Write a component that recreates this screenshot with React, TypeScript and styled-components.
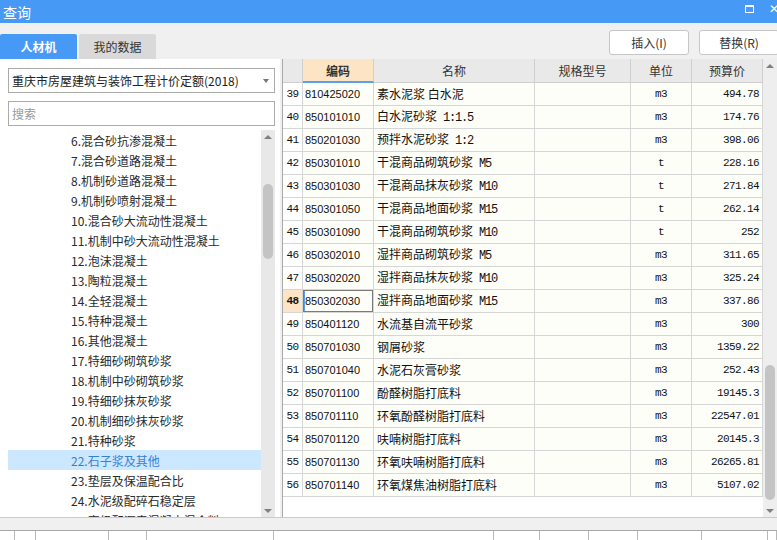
import styled, { createGlobalStyle } from "styled-components";

const GlobalStyle = createGlobalStyle`
    html, body {
        margin: 0;
        padding: 0;
        background: #f0f0f0;
    }
`;

const CJK = `"Noto Sans CJK SC", "Noto Sans", sans-serif`;
const MONO = `"Liberation Mono", "Noto Sans CJK SC", monospace`;

const Window = styled.div`
    width: 777px;
    height: 540px;
    overflow: hidden;
    background: #f0f0f0;
    display: flex;
    flex-direction: column;
    font-family: ${CJK};
`;
const TitleBar = styled.div`
    height: 23px;
    flex: none;
    background: #4799f6;
    display: flex;
    align-items: center;
    padding-left: 3px;
    color: #fff;
    font-size: 14px;
`;
const TitleText = styled.span`
    flex: 1;
    line-height: 1;
`;
const MaxIcon = styled.div`
    width: 7px;
    height: 5px;
    border: 1.5px solid #fff;
    border-top-width: 2.5px;
    margin-right: 15px;
    margin-top: -5px;
`;
const CloseIcon = styled.span`
    font-family: "DejaVu Sans", sans-serif;
    font-weight: 700;
    font-size: 12px;
    width: 8px;
    overflow: hidden;
    margin-top: -6px;
`;
const Toolbar = styled.div`
    height: 36px;
    flex: none;
    display: flex;
    align-items: flex-end;
`;
const Tab = styled.div<{ $active?: boolean }>`
    width: 77px;
    height: 25px;
    margin-right: 2px;
    display: flex;
    align-items: center;
    justify-content: center;
    font-size: 12px;
    font-weight: ${(p) => (p.$active ? 700 : 400)};
    color: ${(p) => (p.$active ? "#fff" : "#333")};
    background: ${(p) => (p.$active ? "#4799f6" : "#d9d9d9")};
    border-top-left-radius: 2px;
    border-top-right-radius: 2px;
`;
const Spacer = styled.div`
    flex: 1;
`;
const Buttons = styled.div`
    align-self: flex-start;
    margin-top: 7px;
    display: flex;
    gap: 10px;
    margin-right: -2px;
`;
const Button = styled.button`
    width: 80px;
    height: 25px;
    box-sizing: border-box;
    background: #fff;
    border: 1px solid #c6c6c6;
    border-radius: 3px;
    font-family: ${CJK};
    font-size: 12px;
    color: #333;
    padding: 0;
`;
const Main = styled.div`
    height: 458px;
    flex: none;
    display: flex;
`;
const LeftPanel = styled.div`
    width: 280px;
    flex: none;
    box-sizing: border-box;
    background: #fff;
    padding: 9px 5px 0 8px;
    display: flex;
    flex-direction: column;
    gap: 8px;
`;
const Field = styled.div`
    height: 25px;
    flex: none;
    box-sizing: border-box;
    border: 1px solid #ababab;
    display: flex;
    align-items: center;
    padding: 0 3px;
    font-size: 12px;
    color: #222;
`;
const FieldText = styled.span<{ $placeholder?: boolean }>`
    flex: 1;
    color: ${(p) => (p.$placeholder ? "#999" : "#222")};
    white-space: nowrap;
`;
const Caret = styled.span`
    width: 0;
    height: 0;
    border-left: 3.5px solid transparent;
    border-right: 3.5px solid transparent;
    border-top: 4px solid #777;
    margin-right: 2px;
`;
const ListWrap = styled.div`
    flex: 1;
    display: flex;
    margin-top: -4px;
    min-height: 0;
    overflow: hidden;
`;
const List = styled.div`
    flex: 1;
    display: flex;
    flex-direction: column;
`;
const ListItem = styled.div<{ $selected?: boolean }>`
    height: 20px;
    flex: none;
    padding-left: 63px;
    display: flex;
    align-items: center;
    font-size: 12px;
    white-space: nowrap;
    color: ${(p) => (p.$selected ? "#3a7fd6" : "#2a2a2a")};
    background: ${(p) => (p.$selected ? "#cce8ff" : "transparent")};
`;
const ScrollTrack = styled.div<{ $light?: boolean }>`
    width: 14px;
    flex: none;
    background: ${(p) => (p.$light ? "#eeeeee" : "#e8e8e8")};
    display: flex;
    flex-direction: column;
    align-items: center;
    padding: 5px 0 4px;
    box-sizing: border-box;
`;
const ArrowUp = styled.div`
    width: 0;
    height: 0;
    border-left: 4px solid transparent;
    border-right: 4px solid transparent;
    border-bottom: 4px solid #808080;
`;
const ArrowDown = styled(ArrowUp)`
    border-bottom: none;
    border-top: 4px solid #808080;
`;
const Thumb = styled.div<{ $top: number; $height: number }>`
    width: 10px;
    height: ${(p) => p.$height}px;
    margin-top: ${(p) => p.$top}px;
    background: #c4c4c4;
    border-radius: 5px;
`;
const TrackFill = styled.div`
    flex: 1;
`;
const Splitter = styled.div`
    width: 2px;
    flex: none;
    background: #f0f0f0;
`;
const GridPanel = styled.div`
    flex: 1;
    display: flex;
    background: #fff;
    border-left: 1px solid #a9a9a9;
`;
const Grid = styled.div`
    width: 480px;
    flex: none;
    display: flex;
    flex-direction: column;
`;
const Row = styled.div<{ $header?: boolean }>`
    display: grid;
    grid-template-columns: 20px 71px 161px 96px 61px 71px;
    height: ${(p) => (p.$header ? 24 : 23)}px;
    flex: none;
`;
const HeadCell = styled.div<{ $active?: boolean }>`
    box-sizing: border-box;
    border-right: 1px solid #cfcfcf;
    border-bottom: ${(p) => (p.$active ? "2px solid #5aa0ee" : "1px solid #cfcfcf")};
    background: ${(p) => (p.$active ? "#fde4c4" : "#e9e9e9")};
    display: flex;
    align-items: center;
    justify-content: center;
    font-size: 12px;
    font-weight: ${(p) => (p.$active ? 700 : 400)};
    color: #333;
`;
const Cell = styled.div<{ $align?: "left" | "center" | "right"; $mono?: boolean; $num?: boolean }>`
    box-sizing: border-box;
    border-right: 1px solid #d6d6d6;
    border-bottom: 1px solid #d6d6d6;
    background: #fefef9;
    display: flex;
    align-items: center;
    justify-content: ${(p) =>
        p.$align === "right" ? "flex-end" : p.$align === "center" ? "center" : "flex-start"};
    padding: 0 3px;
    white-space: nowrap;
    overflow: hidden;
    font-family: ${(p) => (p.$mono ? MONO : p.$num ? `"Liberation Sans", sans-serif` : CJK)};
    font-size: ${(p) => (p.$mono ? 11 : 12)}px;
    letter-spacing: ${(p) => (p.$mono ? "-0.6px" : "0")};
    color: #111;
`;
const RowNum = styled(Cell)<{ $active?: boolean }>`
    justify-content: center;
    padding: 0;
    background: ${(p) => (p.$active ? "#fde4c4" : "#fff")};
    font-weight: ${(p) => (p.$active ? 700 : 400)};
`;
const CodeCell = styled(Cell)<{ $focus?: boolean }>`
    font-size: 11px;
    padding-left: 2px;
    ${(p) =>
        p.$focus &&
        `
        box-shadow: inset 0 0 0 1px #7a7a7a, inset 1px 0 0 1px #5aa0ee;
    `}
`;
const NameText = styled.span`
    font-family: ${CJK};
    font-size: 12px;
    line-height: 16px;
`;
const NameSuffix = styled.span`
    font-family: ${MONO};
    font-size: 12px;
    letter-spacing: -1.2px;
    margin-left: 6px;
`;
const GridSpace = styled.div`
    flex: 1;
`;
const Footer = styled.div`
    flex: 1;
    display: flex;
    flex-direction: column;
    border-top: 1px solid #cacaca;
`;
const FooterStrip = styled.div`
    height: 12px;
    flex: none;
    background: #f0f0f0;
`;
const FooterRow = styled.div`
    flex: 1;
    display: grid;
    grid-template-columns: 15px 21px 73px 38px 127px 220px 46px 49px 49px 64px 66px 9px;
    border-top: 1px solid #a8a8a8;
    background: #fff;
`;
const FooterCell = styled.div`
    border-right: 1px solid #b8b8b8;
`;

const treeItems = [
    "6.混合砂抗渗混凝土",
    "7.混合砂道路混凝土",
    "8.机制砂道路混凝土",
    "9.机制砂喷射混凝土",
    "10.混合砂大流动性混凝土",
    "11.机制中砂大流动性混凝土",
    "12.泡沫混凝土",
    "13.陶粒混凝土",
    "14.全轻混凝土",
    "15.特种混凝土",
    "16.其他混凝土",
    "17.特细砂砌筑砂浆",
    "18.机制中砂砌筑砂浆",
    "19.特细砂抹灰砂浆",
    "20.机制细砂抹灰砂浆",
    "21.特种砂浆",
    "22.石子浆及其他",
    "23.垫层及保温配合比",
    "24.水泥级配碎石稳定层",
    "25.密级配沥青混凝土混合料",
];

const rows: [number, string, string, string, string, string][] = [
    [39, "810425020", "素水泥浆 白水泥", "", "m3", "494.78"],
    [40, "850101010", "白水泥砂浆", "1:1.5", "m3", "174.76"],
    [41, "850201030", "预拌水泥砂浆", "1:2", "m3", "398.06"],
    [42, "850301010", "干混商品砌筑砂浆", "M5", "t", "228.16"],
    [43, "850301030", "干混商品抹灰砂浆", "M10", "t", "271.84"],
    [44, "850301050", "干混商品地面砂浆", "M15", "t", "262.14"],
    [45, "850301090", "干混商品砌筑砂浆", "M10", "t", "252"],
    [46, "850302010", "湿拌商品砌筑砂浆", "M5", "m3", "311.65"],
    [47, "850302020", "湿拌商品抹灰砂浆", "M10", "m3", "325.24"],
    [48, "850302030", "湿拌商品地面砂浆", "M15", "m3", "337.86"],
    [49, "850401120", "水流基自流平砂浆", "", "m3", "300"],
    [50, "850701030", "钢屑砂浆", "", "m3", "1359.22"],
    [51, "850701040", "水泥石灰膏砂浆", "", "m3", "252.43"],
    [52, "850701100", "酚醛树脂打底料", "", "m3", "19145.3"],
    [53, "850701110", "环氧酚醛树脂打底料", "", "m3", "22547.01"],
    [54, "850701120", "呋喃树脂打底料", "", "m3", "20145.3"],
    [55, "850701130", "环氧呋喃树脂打底料", "", "m3", "26265.81"],
    [56, "850701140", "环氧煤焦油树脂打底料", "", "m3", "5107.02"],
];

const footerCols = 12;

export default function App() {
    return (
        <Window>
            <GlobalStyle />
            <TitleBar>
                <TitleText>查询</TitleText>
                <MaxIcon />
                <CloseIcon>✕</CloseIcon>
            </TitleBar>
            <Toolbar>
                <Tab $active>人材机</Tab>
                <Tab>我的数据</Tab>
                <Spacer />
                <Buttons>
                    <Button>插入(I)</Button>
                    <Button>替换(R)</Button>
                </Buttons>
            </Toolbar>
            <Main>
                <LeftPanel>
                    <Field>
                        <FieldText>重庆市房屋建筑与装饰工程计价定额(2018)</FieldText>
                        <Caret />
                    </Field>
                    <Field>
                        <FieldText $placeholder>搜索</FieldText>
                    </Field>
                    <ListWrap>
                        <List>
                            {treeItems.map((t) => (
                                <ListItem key={t} $selected={t.startsWith("22.")}>
                                    {t}
                                </ListItem>
                            ))}
                        </List>
                        <ScrollTrack>
                            <ArrowUp />
                            <Thumb $top={45} $height={75} />
                            <TrackFill />
                            <ArrowDown />
                        </ScrollTrack>
                    </ListWrap>
                </LeftPanel>
                <Splitter />
                <GridPanel>
                    <Grid>
                        <Row $header>
                            <HeadCell />
                            <HeadCell $active>编码</HeadCell>
                            <HeadCell>名称</HeadCell>
                            <HeadCell>规格型号</HeadCell>
                            <HeadCell>单位</HeadCell>
                            <HeadCell>预算价</HeadCell>
                        </Row>
                        {rows.map(([n, code, name, suffix, unit, price]) => (
                            <Row key={n}>
                                <RowNum $mono $active={n === 48}>
                                    {n}
                                </RowNum>
                                <CodeCell $num $focus={n === 48}>
                                    {code}
                                </CodeCell>
                                <Cell>
                                    <NameText>
                                        {name}
                                        {suffix && <NameSuffix>{suffix}</NameSuffix>}
                                    </NameText>
                                </Cell>
                                <Cell />
                                <Cell $mono $align="center">
                                    {unit}
                                </Cell>
                                <Cell $mono $align="right">
                                    {price}
                                </Cell>
                            </Row>
                        ))}
                        <GridSpace />
                    </Grid>
                    <ScrollTrack $light>
                        <ArrowUp />
                        <Thumb $top={297} $height={135} />
                        <TrackFill />
                        <ArrowDown />
                    </ScrollTrack>
                </GridPanel>
            </Main>
            <Footer>
                <FooterStrip />
                <FooterRow>
                    {Array.from({ length: footerCols }, (_, i) => (
                        <FooterCell key={i} />
                    ))}
                </FooterRow>
            </Footer>
        </Window>
    );
}
